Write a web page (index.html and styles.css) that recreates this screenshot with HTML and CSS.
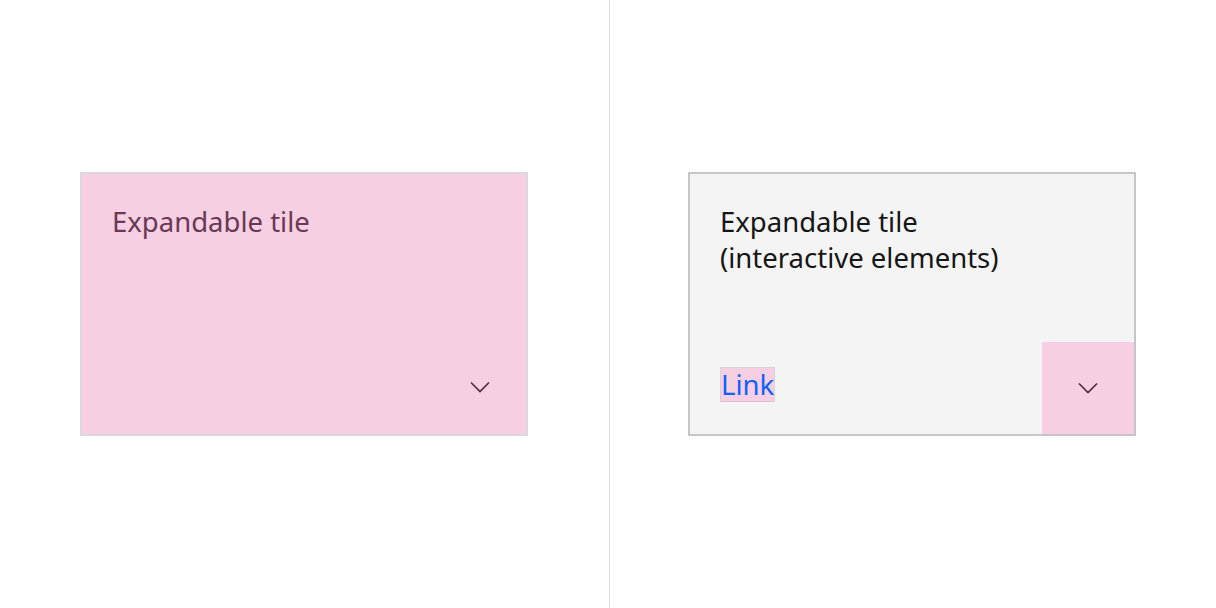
FILE: index.html
```html
<!DOCTYPE html>
<html lang="en">
<head>
<meta charset="utf-8">
<title>Expandable tiles</title>
<link rel="stylesheet" href="styles.css">
</head>
<body>
<main class="stage">
  <section class="half half-left">
    <div class="tile tile-pink">
      <p class="tile-title">Expandable tile</p>
      <span class="chevron chevron-plain">
        <svg width="20" height="20" viewBox="0 0 20 20" aria-hidden="true"><path d="M1 5.5 L10 14.5 L19 5.5" fill="none" stroke="currentColor" stroke-width="1.6"/></svg>
      </span>
    </div>
  </section>
  <div class="divider"></div>
  <section class="half half-right">
    <div class="tile tile-gray">
      <p class="tile-title tile-title-dark">Expandable tile<br>(interactive elements)</p>
      <div class="tile-footer">
        <a class="link" href="#">Link</a>
        <span class="chevron-btn">
          <svg width="20" height="20" viewBox="0 0 20 20" aria-hidden="true"><path d="M1 5.5 L10 14.5 L19 5.5" fill="none" stroke="currentColor" stroke-width="1.6"/></svg>
        </span>
      </div>
    </div>
  </section>
</main>
</body>
</html>
```
FILE: styles.css
```css
* { box-sizing: border-box; }
html, body { margin: 0; padding: 0; background: #ffffff; }
body { font-family: "Noto Sans", "Open Sans", sans-serif; }
.stage {
  display: grid;
  grid-template-columns: 609px 1px 1fr;
  width: 1216px;
  height: 608px;
}
.half {
  display: flex;
  align-items: center;
  justify-content: flex-start;
}
.half-left { padding-left: 80px; }
.half-right { padding-left: 78px; }
.divider { background: #e0e0e0; }
.tile {
  position: relative;
  width: 448px;
  height: 264px;
  border: 2px solid #d9d9d9;
  display: flex;
  flex-direction: column;
}
.tile-pink { background: #f6d0e2; }
.tile-gray { background: #f4f4f4; border-color: #c6c6c6; }
.tile-title {
  margin: 0;
  padding: 30px 30px 0 30px;
  font-size: 27.5px;
  line-height: 36px;
  color: #6a3854;
}
.tile-title-dark { color: #161616; }
.chevron {
  position: absolute;
  right: 36px;
  bottom: 37px;
  width: 20px;
  height: 20px;
  color: #4e2a3d;
}
.chevron svg, .chevron-btn svg { display: block; }
.tile-footer {
  margin-top: auto;
  display: flex;
  align-items: center;
  justify-content: space-between;
  padding-left: 30px;
}
.link {
  margin-bottom: 7px;
  font-size: 27.5px;
  line-height: 33px;
  color: #0f62fe;
  text-decoration: none;
  background: #f6d0e2;
  border: 1px solid #d4d4d4;
  border-bottom-color: #e2bccd;
}
.chevron-btn {
  width: 92px;
  height: 92px;
  background: #f6d0e2;
  display: flex;
  align-items: center;
  justify-content: center;
  color: #4e2a3d;
}
```
